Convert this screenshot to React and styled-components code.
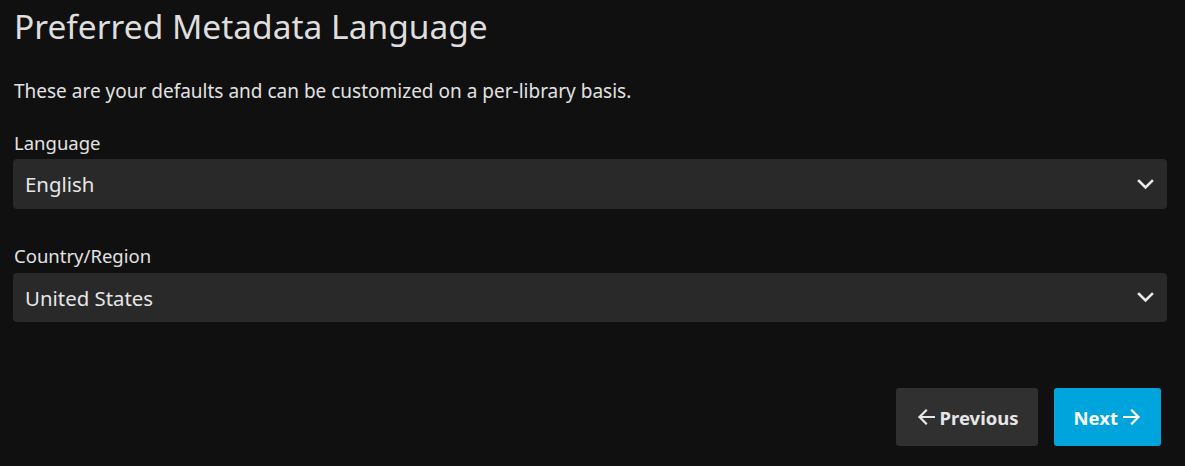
import React from "react";
import styled, { createGlobalStyle } from "styled-components";

const Global = createGlobalStyle`
  html, body { margin: 0; padding: 0; background: #101010; }
  body { font-family: "Noto Sans", "Open Sans", sans-serif; color: rgba(255,255,255,0.87); }
`;

const Page = styled.div`
  padding: 0 18px 0 13px;
  display: flex;
  flex-direction: column;
`;

const Title = styled.h1`
  margin: 4px 0 0 1px;
  font-size: 33.5px;
  font-weight: 400;
  line-height: 44px;
  color: #dedede;
`;

const Description = styled.p`
  margin: 30px 0 0 1px;
  font-size: 19px;
  line-height: 26px;
  color: #e2e2e2;
`;

const Field = styled.div`
  display: flex;
  flex-direction: column;
  margin-top: ${(p) => p.$top}px;
`;

const Label = styled.label`
  font-size: 18.5px;
  line-height: 24px;
  margin-left: 1px;
  margin-bottom: ${(p) => p.$gap}px;
  color: #e2e2e2;
`;

const SelectBox = styled.div`
  height: ${(p) => p.$h}px;
  background: #292929;
  border-radius: 4px;
  display: flex;
  align-items: center;
  justify-content: space-between;
  padding: 0 13px 0 12px;
  font-size: 20.4px;
  color: #e6e6e6;
`;

const Actions = styled.div`
  display: flex;
  justify-content: flex-end;
  gap: 16px;
  margin-top: 66px;
  padding-right: 6px;
`;

const Button = styled.button`
  height: 58px;
  border: none;
  border-radius: 3px;
  padding: 0 ${(p) => (p.$primary ? 21 : 19)}px 0 ${(p) => (p.$primary ? 20 : 22)}px;
  background: ${(p) => (p.$primary ? "#00a4dc" : "#303030")};
  color: ${(p) => (p.$primary ? "#ffffff" : "#e6e6e6")};
  font-family: "Noto Sans", "Open Sans", sans-serif;
  font-weight: 700;
  font-size: 18.5px;
  display: flex;
  align-items: center;
  gap: 5px;
  cursor: pointer;
`;

const Chevron = () => (
  <svg width="17" height="11" viewBox="0 0 17 11" fill="none">
    <polyline points="2,2 8.5,8.5 15,2" stroke="#e8e8e8" strokeWidth="2.6" strokeLinecap="square" />
  </svg>
);

const Arrow = ({ dir }) => (
  <svg width="17" height="16" viewBox="0 0 17 16" fill="none"
    style={dir === "left" ? { transform: "scaleX(-1)" } : undefined}>
    <path d="M1 8 H15.5 M9 1.5 L15.5 8 L9 14.5" stroke="currentColor" strokeWidth="2.2" strokeLinecap="square" />
  </svg>
);

export default function App() {
  return (
    <Page>
      <Global />
      <Title>Preferred Metadata Language</Title>
      <Description>These are your defaults and can be customized on a per-library basis.</Description>
      <Field $top={27}>
        <Label $gap={4}>Language</Label>
        <SelectBox $h={50}>
          <span>English</span>
          <Chevron />
        </SelectBox>
      </Field>
      <Field $top={35}>
        <Label $gap={5}>Country/Region</Label>
        <SelectBox $h={49}>
          <span>United States</span>
          <Chevron />
        </SelectBox>
      </Field>
      <Actions>
        <Button>
          <Arrow dir="left" />
          Previous
        </Button>
        <Button $primary>
          Next
          <Arrow dir="right" />
        </Button>
      </Actions>
    </Page>
  );
}
